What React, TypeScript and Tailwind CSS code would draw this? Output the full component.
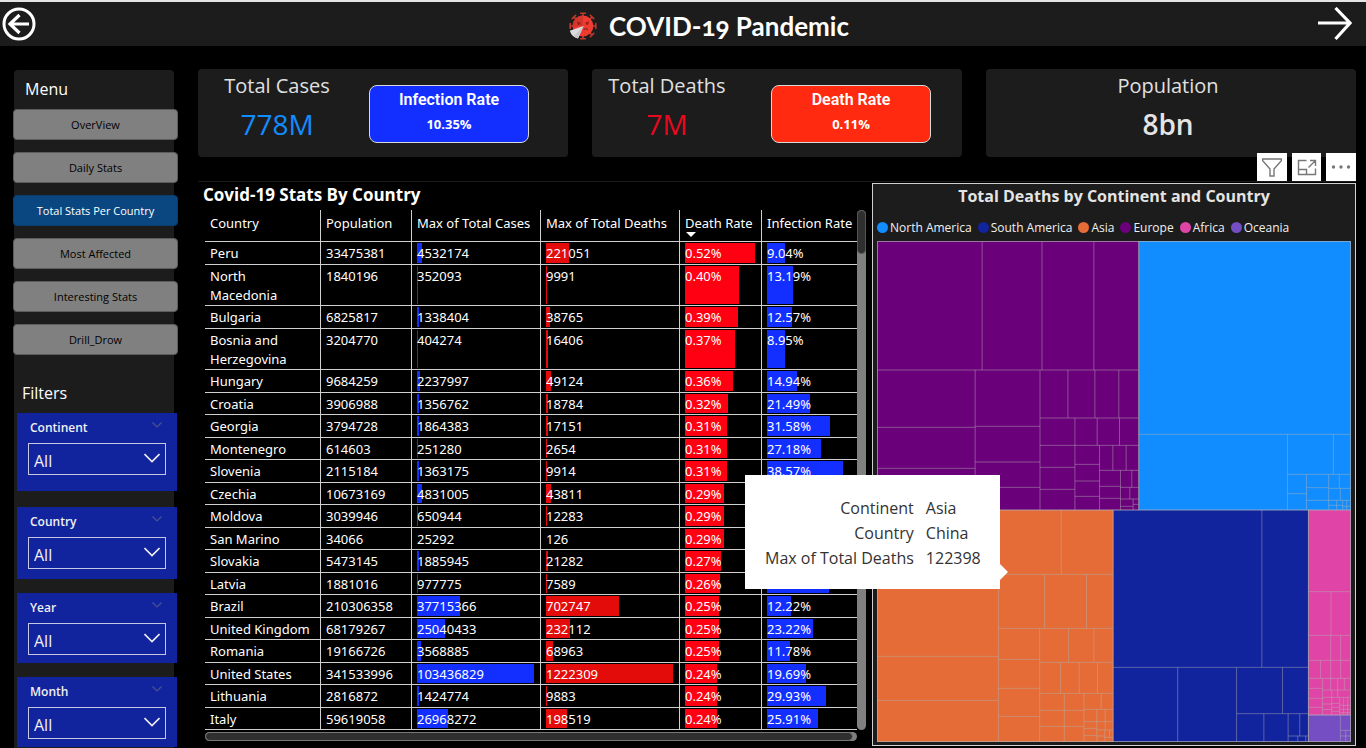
import React from "react";

const menuItems = [
  "OverView",
  "Daily Stats",
  "Total Stats Per Country",
  "Most Affected",
  "Interesting Stats",
  "Drill_Drow",
];

const filters = [
  { label: "Continent", spacing: "pb-4" },
  { label: "Country", spacing: "mt-4 pb-2.5" },
  { label: "Year", spacing: "mt-3.5 pb-2" },
  { label: "Month", spacing: "mt-3.5 pb-2" },
];

type Row = [string, number, number, number, string, string | null];

const rows: Row[] = [
  ["Peru", 33475381, 4532174, 221051, "0.52", "9.04"],
  ["North Macedonia", 1840196, 352093, 9991, "0.40", "13.19"],
  ["Bulgaria", 6825817, 1338404, 38765, "0.39", "12.57"],
  ["Bosnia and Herzegovina", 3204770, 404274, 16406, "0.37", "8.95"],
  ["Hungary", 9684259, 2237997, 49124, "0.36", "14.94"],
  ["Croatia", 3906988, 1356762, 18784, "0.32", "21.49"],
  ["Georgia", 3794728, 1864383, 17151, "0.31", "31.58"],
  ["Montenegro", 614603, 251280, 2654, "0.31", "27.18"],
  ["Slovenia", 2115184, 1363175, 9914, "0.31", "38.57"],
  ["Czechia", 10673169, 4831005, 43811, "0.29", null],
  ["Moldova", 3039946, 650944, 12283, "0.29", null],
  ["San Marino", 34066, 25292, 126, "0.29", null],
  ["Slovakia", 5473145, 1885945, 21282, "0.27", null],
  ["Latvia", 1881016, 977775, 7589, "0.26", "31.50"],
  ["Brazil", 210306358, 37715366, 702747, "0.25", "12.22"],
  ["United Kingdom", 68179267, 25040433, 232112, "0.25", "23.22"],
  ["Romania", 19166726, 3568885, 68963, "0.25", "11.78"],
  ["United States", 341533996, 103436829, 1222309, "0.24", "19.69"],
  ["Lithuania", 2816872, 1424774, 9883, "0.24", "29.93"],
  ["Italy", 59619058, 26968272, 198519, "0.24", "25.91"],
];

const headers = [
  "Country",
  "Population",
  "Max of Total Cases",
  "Max of Total Deaths",
  "Death Rate",
  "Infection Rate",
];

const legend = [
  { name: "North America", dot: "bg-[#118dff]" },
  { name: "South America", dot: "bg-[#12239e]" },
  { name: "Asia", dot: "bg-[#e66c37]" },
  { name: "Europe", dot: "bg-[#6b007b]" },
  { name: "Africa", dot: "bg-[#e044a7]" },
  { name: "Oceania", dot: "bg-[#744ec2]" },
];

function BarCell({ value, max, text, color }: { value: number; max: number; text: string; color: string }) {
  return (
    <td className="relative border-r border-b border-[#d0d0d0] py-0 pt-0.5 pl-[5px] align-top whitespace-nowrap last:border-r-0">
      <div className="absolute inset-y-px right-1.5 left-[5px]">
        <div className={`h-full ${color}`} style={{ width: `${(value / max) * 100}%` }} />
      </div>
      <span className="relative">{text}</span>
    </td>
  );
}

function VirusIcon() {
  const spikes = [0, 45, 90, 135, 180, 225, 270, 315];
  return (
    <svg viewBox="0 0 28 28" className="size-7 shrink-0" aria-hidden="true">
      <g stroke="#c0392b" strokeWidth="1.6" fill="none" strokeLinecap="round">
        {spikes.map((a) => (
          <path key={a} d="M14 5V1.500M11.600 1.200h4.800" transform={`rotate(${a} 14 14)`} />
        ))}
      </g>
      <circle cx="14" cy="14" r="10.400" fill="#f03c30" />
      <path d="M14 3.600a10.400 10.400 0 0 0-10.300 11.900L14 13.800z" fill="#d3342c" />
      <path d="m8.300 9.200 3.200 1.400c.2 1.400-.6 2.400-1.600 2.400-1.200 0-2-1.600-1.600-3.800zM19.700 9.200l-3.200 1.400c-.2 1.400.6 2.400 1.600 2.400 1.200 0 2-1.600 1.600-3.800z" fill="#98201d" />
      <path d="M14.800 18.200c.8-2 3.200-2 4 0" stroke="#98201d" strokeWidth="1.300" fill="none" />
      <path d="M.8 18.800 14.600 14 9 26.600Q2.600 25 .8 18.800z" fill="#dcdce0" />
      <path d="M14.600 14 4.800 24q2 1.900 4.200 2.600z" fill="#c6c6cc" />
    </svg>
  );
}

function Treemap() {
  return (
    <svg
      viewBox="0 0 1425 1503"
      preserveAspectRatio="none"
      className="block h-[501px] w-full"
      role="img"
      aria-label="Treemap of deaths by continent and country"
    >
      <rect x="0" y="0" width="787" height="807" fill="#6b007b" />
      <rect x="787" y="0" width="638" height="807" fill="#118dff" />
      <rect x="0" y="807" width="710" height="696" fill="#e66c37" />
      <rect x="710" y="807" width="587" height="696" fill="#12239e" />
      <rect x="1297" y="807" width="128" height="615" fill="#e044a7" />
      <rect x="1297" y="1422" width="128" height="81" fill="#744ec2" />
      <g fill="none" stroke="#b3b3b3" strokeOpacity="0.45" strokeWidth="3">
        {/* Europe */}
        <path
          transform="translate(-33 -33)"
          d="M349 35V420M529 35V420M685 35V420M34 420H820M328 420V840M523 420V840M34 592H328M34 715H328M328 589H523M328 696H523M328 772H523M523 564H820M607 420V564M688 420V564M760 420V564M523 646H820M628 564V840M695 564V646M762 564V646M523 712H628M523 778H628M628 703H702M628 753H702M628 799H702M702 646V840M742 646V721M782 646V721M702 721H820M765 721V840M702 769H765M702 805H765M799 721V772M765 772H820M793 772V807M765 807H820M803 807V840M765 829H803M803 823H820"
        />
        {/* Asia */}
        <path
          transform="translate(-21 777)"
          d="M386 30V724M575 30V223M386 223H731M525 223V385M651 223V385M386 385H731M21 469H386M21 601H386M510 385V724M386 478H510M386 565H510M386 649H510M597 385V487M673 385V487M510 487H731M573 487V580M629 487V580M684 487V580M510 580H731M584 580V724M510 631H643M510 679H643M643 580V724M695 580V628M643 628H731M682 628V724M707 628V690M643 665H731M643 685H682M643 706H682M682 690H731M682 708H706M706 690V724M720 690V712M706 712H731"
        />
        {/* North America, South America, Africa and Oceania */}
        <path
          transform="translate(699 477)"
          d="M89 103H724M535 103V329M673 103V223M535 223H724M592 223V329M535 281H592M592 263H659M592 301H724M659 223V329M691 223V265M659 265H724M694 265V301M683 301V329M701 301V329M713 301V329M659 316H701M701 319H724M458 330V802M11 802H598M205 802V1024M382 802V1024M520 802V941M382 941H598M464 941V1024M537 941V1024M572 941V1008M537 1008H598M566 1008V1024M590 1008V1024M598 575H725M666 575V706M598 706H725M665 706V870M695 706V835M598 781H725M634 781V835M598 835H725M640 835V945M598 865H640M598 895H640M598 922H640M686 835V892M706 835V870M640 870H725M668 870V945M640 892H725M640 912H668M640 928H668M692 892V945M668 910H692M668 922H692M668 934H692M704 892V945M716 892V945M692 916H725M692 928H725M692 938H725M694 945V1024M694 991H725M710 991V1024M694 1008H725"
        />
        <path strokeOpacity="0.8" d="M1 1H1424V1502H1V1zM787 0V807M0 807H1425M710 807V1503M1297 807V1503M1297 1422H1425" />
      </g>
    </svg>
  );
}

function KpiTitle({ title, value, valueClass, className }: { title: string; value: string; valueClass: string; className: string }) {
  return (
    <div className={`flex flex-col items-center ${className}`}>
      <h2 className="mt-px text-xl leading-8 whitespace-nowrap text-[#e0e0e0]">{title}</h2>
      <p className={`mt-0.5 text-[28px] leading-10 ${valueClass}`}>{value}</p>
    </div>
  );
}

function RatePill({ label, value, className }: { label: string; value: string; className: string }) {
  return (
    <div className={`mt-4 h-[58px] w-40 rounded-lg border border-[#d8d8d8] text-center text-white ${className}`}>
      <h3 className="mt-0.5 font-['Roboto',sans-serif] text-base leading-6 font-semibold">{label}</h3>
      <p className="text-[13px] leading-6 font-bold">{value}</p>
    </div>
  );
}

export default function App() {
  return (
    <div className="flex min-h-screen flex-col overflow-hidden bg-black font-['Open_Sans','Noto_Sans',sans-serif] text-white">
      <header className="flex h-[46px] items-center justify-between border-t-2 border-[#e3e4e6] bg-[#1c1c1c] px-0.5">
        <button aria-label="Back" className="size-[34px]">
          <svg viewBox="0 0 34 34" className="size-full" fill="none" stroke="#fff">
            <circle cx="17" cy="17" r="15" strokeWidth="3" />
            <path d="M27 17H8M17.500 8 8 17l9.500 9" strokeWidth="3.200" />
          </svg>
        </button>
        <div className="flex items-center gap-3 pt-1 pl-16">
          <VirusIcon />
          <h1 className="font-['Lato',sans-serif] text-[26px] leading-10 font-bold oldstyle-nums">COVID-19 Pandemic</h1>
        </div>
        <button aria-label="Next" className="mr-3 size-[34px]">
          <svg viewBox="0 0 34 34" className="size-full" fill="none" stroke="#fff" strokeWidth="3.200">
            <path d="M0 16H32M17.500 1 32 16 17.500 32" />
          </svg>
        </button>
      </header>

      <div className="flex flex-1 gap-6 pr-2.5 pl-3.5">
        <aside className="mt-6 w-40 shrink-0 rounded-t bg-[#1c1c1c]">
          <h2 className="h-[39px] pl-[11px] text-base leading-[38px]">Menu</h2>
          <nav className="-mr-1 -ml-px flex flex-col gap-3">
            {menuItems.map((item) => (
              <button
                key={item}
                className={`h-[31px] rounded border pt-0.5 text-[11px] ${
                  item === "Total Stats Per Country"
                    ? "border-[#0b3d6b] bg-[#0a4780] font-medium text-white"
                    : "border-[#5c5c5c] bg-[#808080] text-black"
                }`}
              >
                {item}
              </button>
            ))}
          </nav>
          <h2 className="mt-6 h-[34px] pl-2 text-base leading-7">Filters</h2>
          <div className="-mr-[3px] ml-[3px]">
            {filters.map((f) => (
              <div key={f.label} className={`bg-[#12239e] px-[11px] ${f.spacing}`}>
                <div className="flex h-[30px] items-center justify-between pl-0.5">
                  <label htmlFor={f.label} className="text-xs font-semibold text-[#f0f0f0]">
                    {f.label}
                  </label>
                  <svg viewBox="0 0 10 6" className="mr-1 mb-1.5 h-1.5 w-2.5" fill="none" stroke="#4a5194" strokeWidth="1.200">
                    <path d="m.5.5 4.500 4.500L9.500.5" />
                  </svg>
                </div>
                <div className="relative">
                  <select
                    id={f.label}
                    className="block h-8 w-full appearance-none border border-[#c4c8e4] bg-transparent pt-1 pl-[5px] text-base leading-6 font-medium text-[#f0f0f0]"
                  >
                    <option>All</option>
                  </select>
                  <svg
                    viewBox="0 0 16 10"
                    className="pointer-events-none absolute top-2.5 right-1.5 h-2.5 w-4"
                    fill="none"
                    stroke="#f0f0f0"
                    strokeWidth="1.600"
                  >
                    <path d="m.5 1 7.500 7.500L15.500 1" />
                  </svg>
                </div>
              </div>
            ))}
          </div>
        </aside>

        <main className="mt-[23px] flex min-w-0 flex-1 flex-col">
          <section className="grid grid-cols-3 gap-6">
            <div className="flex h-[88px] rounded-sm bg-[#1c1c1c]">
              <KpiTitle title="Total Cases" value="778M" valueClass="font-medium text-[#118dff]" className="w-[158px]" />
              <RatePill label="Infection Rate" value="10.35%" className="ml-[13px] bg-[#122fff]" />
            </div>
            <div className="flex h-[88px] rounded-sm bg-[#1c1c1c]">
              <KpiTitle title="Total Deaths" value="7M" valueClass="font-medium text-[#e8081f]" className="w-[150px]" />
              <RatePill label="Death Rate" value="0.11%" className="ml-[29px] bg-[#ff2a0f]" />
            </div>
            <div className="h-[88px] rounded-sm bg-[#1c1c1c]">
              <KpiTitle title="Population" value="8bn" valueClass="font-semibold text-[#e4e4e4]" className="pr-1.5" />
            </div>
          </section>

          <div className="mt-6 grid grid-cols-[minmax(0,669fr)_minmax(0,484fr)] gap-[5px] border-t border-[#1c1c1c]">
            <section className="pr-px pl-[7px]">
              <h2 className="-ml-0.5 h-7 text-[17px] leading-[26px] font-bold">Covid-19 Stats By Country</h2>
              <div className="flex">
                <div className="min-w-0 flex-1">
                  <table className="w-full table-fixed border-separate border-spacing-0 font-['Noto_Sans',sans-serif] text-[13px] leading-[19px]">
                    <colgroup>
                      <col className="w-[116px]" />
                      <col className="w-[91px]" />
                      <col className="w-[129px]" />
                      <col className="w-[139px]" />
                      <col className="w-[82px]" />
                      <col className="w-[95px]" />
                    </colgroup>
                    <thead>
                      <tr className="h-8">
                        {headers.map((h) => (
                          <th
                            key={h}
                            scope="col"
                            className="relative border-r border-b border-[#d0d0d0] pt-1 pl-[5px] text-left align-top font-normal whitespace-nowrap last:border-r-0"
                          >
                            {h}
                            {h === "Death Rate" && (
                              <svg viewBox="0 0 10 5" className="absolute bottom-1 left-1.5 h-[5px] w-2.5" fill="#fff">
                                <path d="M0 0h10L5 5z" />
                              </svg>
                            )}
                          </th>
                        ))}
                      </tr>
                    </thead>
                    <tbody>
                      {rows.map(([country, population, cases, deaths, deathRate, infectionRate]) => (
                        <tr key={country} className="odd:h-[23px] even:h-[22px]">
                          <td className="border-r border-b border-[#d0d0d0] pt-0.5 pr-1 pl-[5px] align-top">{country}</td>
                          <td className="border-r border-b border-[#d0d0d0] pt-0.5 pl-[5px] align-top">{population}</td>
                          <BarCell value={cases} max={103436829} text={`${cases}`} color="bg-[#122fff]" />
                          <BarCell value={deaths} max={1222309} text={`${deaths}`} color="bg-[#e40b0b]" />
                          <BarCell value={Number(deathRate)} max={0.52} text={`${deathRate}%`} color="bg-[#ff0012]" />
                          <BarCell
                            value={Number(infectionRate)}
                            max={42.4}
                            text={infectionRate === null ? "" : `${infectionRate}%`}
                            color="bg-[#122fff]"
                          />
                        </tr>
                      ))}
                    </tbody>
                  </table>
                </div>
                <div className="w-[9px] shrink-0 rounded-full bg-[#808080]">
                  <div className="h-11 rounded-full border border-[#555] bg-[#2f2f2f]" />
                </div>
              </div>
              <div className="mt-0.5 mr-[9px] h-[9px] rounded-full bg-[#808080] pr-1">
                <div className="h-full rounded-full border border-[#777] bg-[#2f2f2f]" />
              </div>
            </section>

            <section className="relative mt-px border border-[#d0d0d0] bg-[#1c1c1c] px-1 pb-[3px]">
              <div className="absolute -top-[31px] -right-px flex gap-[5px]">
                <button aria-label="Filters on this visual" className="grid h-7 w-[30px] place-items-center bg-white">
                  <svg viewBox="0 0 20 20" className="size-5" fill="none" stroke="#777" strokeWidth="1.400">
                    <path d="M.5 2h19v1.500L12 12v7H8v-7L.5 3.500z" />
                  </svg>
                </button>
                <button aria-label="Focus mode" className="grid h-7 w-[29px] place-items-center bg-white">
                  <svg viewBox="0 0 20 20" className="size-5" fill="none" stroke="#777" strokeWidth="1.400">
                    <path d="M9.500 3.500h-8v14h17v-6M1.500 12.500h8v5M11.500 10.500l7-7M13 3.500h5.500V9" />
                  </svg>
                </button>
                <button aria-label="More options" className="grid h-7 w-[30px] place-items-center bg-white">
                  <svg viewBox="0 0 20 20" className="size-5" fill="#777">
                    <circle cx="2.500" cy="10" r="1.700" />
                    <circle cx="10" cy="10" r="1.700" />
                    <circle cx="17.500" cy="10" r="1.700" />
                  </svg>
                </button>
              </div>
              <h2 className="h-[26px] text-center text-base leading-6 font-bold whitespace-nowrap text-[#e4e4e4]">
                Total Deaths by Continent and Country
              </h2>
              <ul className="flex h-[31px] items-center gap-1.5 pt-1 text-xs font-medium whitespace-nowrap text-[#f0f0f0]">
                {legend.map((l) => (
                  <li key={l.name} className="flex items-center gap-0.5">
                    <span className={`size-[11px] rounded-full ${l.dot}`} />
                    {l.name}
                  </li>
                ))}
              </ul>
              <Treemap />

              <div
                role="tooltip"
                className="absolute top-[291px] -left-32 h-[114px] w-[255px] bg-white px-5 pt-[21px] text-base leading-[25px] text-[#333]"
              >
                <dl className="grid grid-cols-[auto_auto] justify-between gap-x-3 whitespace-nowrap">
                  <dt className="text-right">Continent</dt>
                  <dd>Asia</dd>
                  <dt className="text-right">Country</dt>
                  <dd>China</dd>
                  <dt className="text-right">Max of Total Deaths</dt>
                  <dd>122398</dd>
                </dl>
                <svg viewBox="0 0 8 16" className="absolute top-[89px] left-full h-4 w-2" fill="#fff">
                  <path d="M0 0 8 8 0 16z" />
                </svg>
              </div>
            </section>
          </div>
        </main>
      </div>
    </div>
  );
}
